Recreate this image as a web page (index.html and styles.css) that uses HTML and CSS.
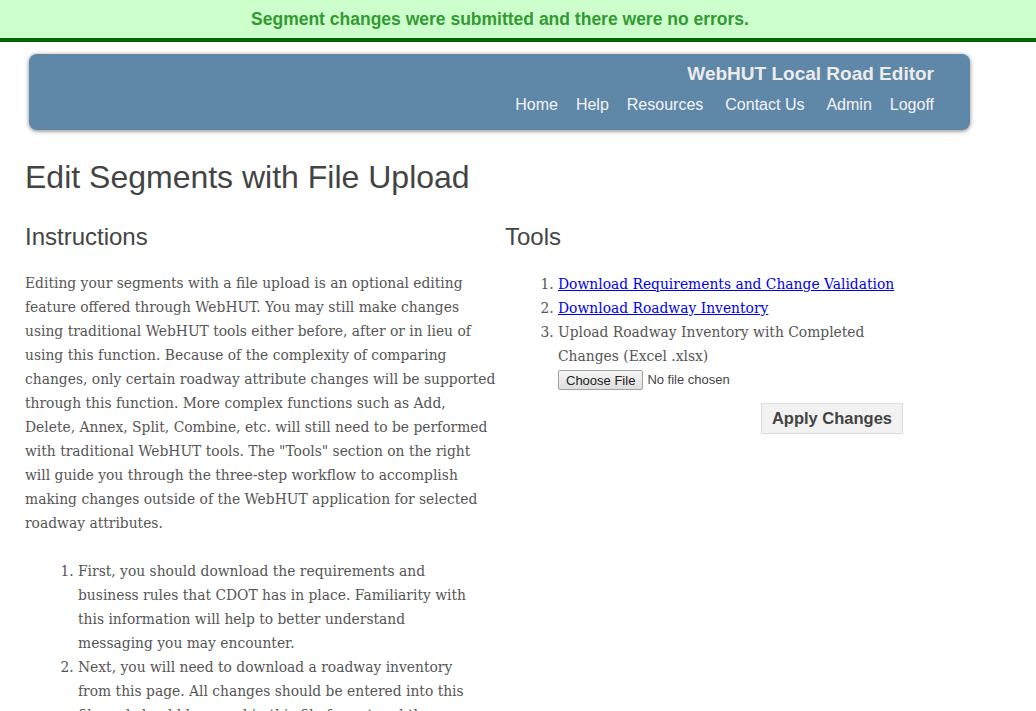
FILE: index.html
```html
<!DOCTYPE html>
<html lang="en">
<head>
    <meta charset="UTF-8">
    <meta name="viewport" content="width=device-width, initial-scale=1.0">
    <title>Edit Segments with File Upload</title>
    <link rel="stylesheet" href="styles.css">
</head>
<body>
    <div class="message">Segment changes were submitted and there were no errors.</div>

    <div class="header">
        <div class="app-title">WebHUT Local Road Editor</div>
        <ul class="nav">
            <li><a href="#">Home</a></li>
            <li><a href="#">Help</a></li>
            <li><a href="#">Resources</a></li>
            <li class="wide"><a href="#">Contact Us</a></li>
            <li class="wide"><a href="#">Admin</a></li>
            <li><a href="#">Logoff</a></li>
        </ul>
    </div>

    <div class="content">
        <h1>Edit Segments with File Upload</h1>

        <div class="columns">
            <div class="col-left">
                <h2>Instructions</h2>
                <p>Editing your segments with a file upload is an optional editing feature offered through WebHUT. You may still make changes using traditional WebHUT tools either before, after or in lieu of using this function. Because of the complexity of comparing changes, only certain roadway attribute changes will be supported through this function. More complex functions such as Add, Delete, Annex, Split, Combine, etc. will still need to be performed with traditional WebHUT tools. The "Tools" section on the right will guide you through the three-step workflow to accomplish making changes outside of the WebHUT application for selected roadway attributes.</p>

                <ol class="steps">
                    <li>First, you should download the requirements and business rules that CDOT has in place. Familiarity with this information will help to better understand messaging you may encounter.</li>
                    <li>Next, you will need to download a roadway inventory from this page. All changes should be entered into this file and should be saved in this file format and then uploaded.</li>
                </ol>
            </div>

            <div class="col-right">
                <h2>Tools</h2>
                <ol class="tools">
                    <li><a href="#">Download Requirements and Change Validation</a></li>
                    <li><a href="#">Download Roadway Inventory</a></li>
                    <li>Upload Roadway Inventory with Completed Changes (Excel .xlsx)
                        <div class="file-row">
                            <button class="choose">Choose File</button>
                            <span class="no-file">No file chosen</span>
                        </div>
                    </li>
                </ol>
                <div class="apply-row">
                    <button class="apply">Apply Changes</button>
                </div>
            </div>
        </div>
    </div>
</body>
</html>
```

FILE: styles.css
```css
body {
    margin: 0;
    font-family: "DejaVu Serif", Georgia, serif;
    color: #555;
    background: #fff;
}
.message {
    background-color: #ccffcc;
    border-bottom: 4px solid #006600;
    color: #339933;
    font-family: "Liberation Sans", Arial, sans-serif;
    font-weight: bold;
    font-size: 17.5px;
    text-align: center;
    height: 38px;
    line-height: 38px;
    padding-right: 36px;
}
.header {
    margin: 12px 0 0 29px;
    width: 941px;
    height: 76px;
    box-sizing: border-box;
    background-color: #5f87a8;
    border-radius: 8px;
    box-shadow: 0 1px 4px rgba(0, 0, 0, 0.5);
    padding: 8px 36px 0 0;
    text-align: right;
    font-family: "Liberation Sans", Arial, sans-serif;
}
.app-title {
    color: #ececec;
    font-weight: bold;
    font-size: 19px;
    line-height: 24px;
}
.nav {
    list-style: none;
    margin: 7px 0 0;
    padding: 0;
    display: flex;
    justify-content: flex-end;
    gap: 18px;
}
.nav li {
    font-size: 16px;
    line-height: 24px;
}
.nav .wide {
    margin-left: 4px;
}
.nav a {
    color: #f4f4f4;
    text-decoration: none;
}
.content {
    padding: 0 25px;
}
h1 {
    font-family: "Liberation Sans", Arial, sans-serif;
    font-weight: normal;
    font-size: 32px;
    color: #444;
    margin: 27px 0 0;
    line-height: 40px;
}
h2 {
    font-family: "Liberation Sans", Arial, sans-serif;
    font-weight: normal;
    font-size: 24px;
    color: #444;
    margin: 0;
    line-height: 30px;
}
.columns {
    display: flex;
    gap: 8px;
    margin-top: 25px;
}
.col-left {
    width: 472px;
}
.col-right {
    width: 398px;
}
p, li {
    font-size: 13.85px;
    line-height: 24px;
}
p {
    margin: 19px 0 0;
}
.steps {
    margin: 24px 0 0;
    padding: 0 26px 0 53px;
}
.tools {
    margin: 20px 0 0;
    padding-left: 53px;
}
.tools a {
    color: #0000ee;
}
.file-row {
    display: flex;
    align-items: center;
    gap: 4px;
}
.choose {
    font-family: "Liberation Sans", Arial, sans-serif;
    font-size: 13px;
    color: #222;
    padding: 1px 7px;
    border: 1px solid #a0a0a0;
    border-radius: 2px;
    background: linear-gradient(#f6f6f6, #dedede);
    height: 20px;
}
.no-file {
    font-family: "Liberation Sans", Arial, sans-serif;
    font-size: 13px;
    color: #444;
}
.apply-row {
    display: flex;
    justify-content: flex-end;
    margin-top: 11px;
}
.apply {
    font-family: "Liberation Sans", Arial, sans-serif;
    font-weight: bold;
    font-size: 16.5px;
    color: #444;
    background: #f2f2f2;
    border: 1px solid #dcdcdc;
    padding: 0 10px;
    height: 31px;
}
```
